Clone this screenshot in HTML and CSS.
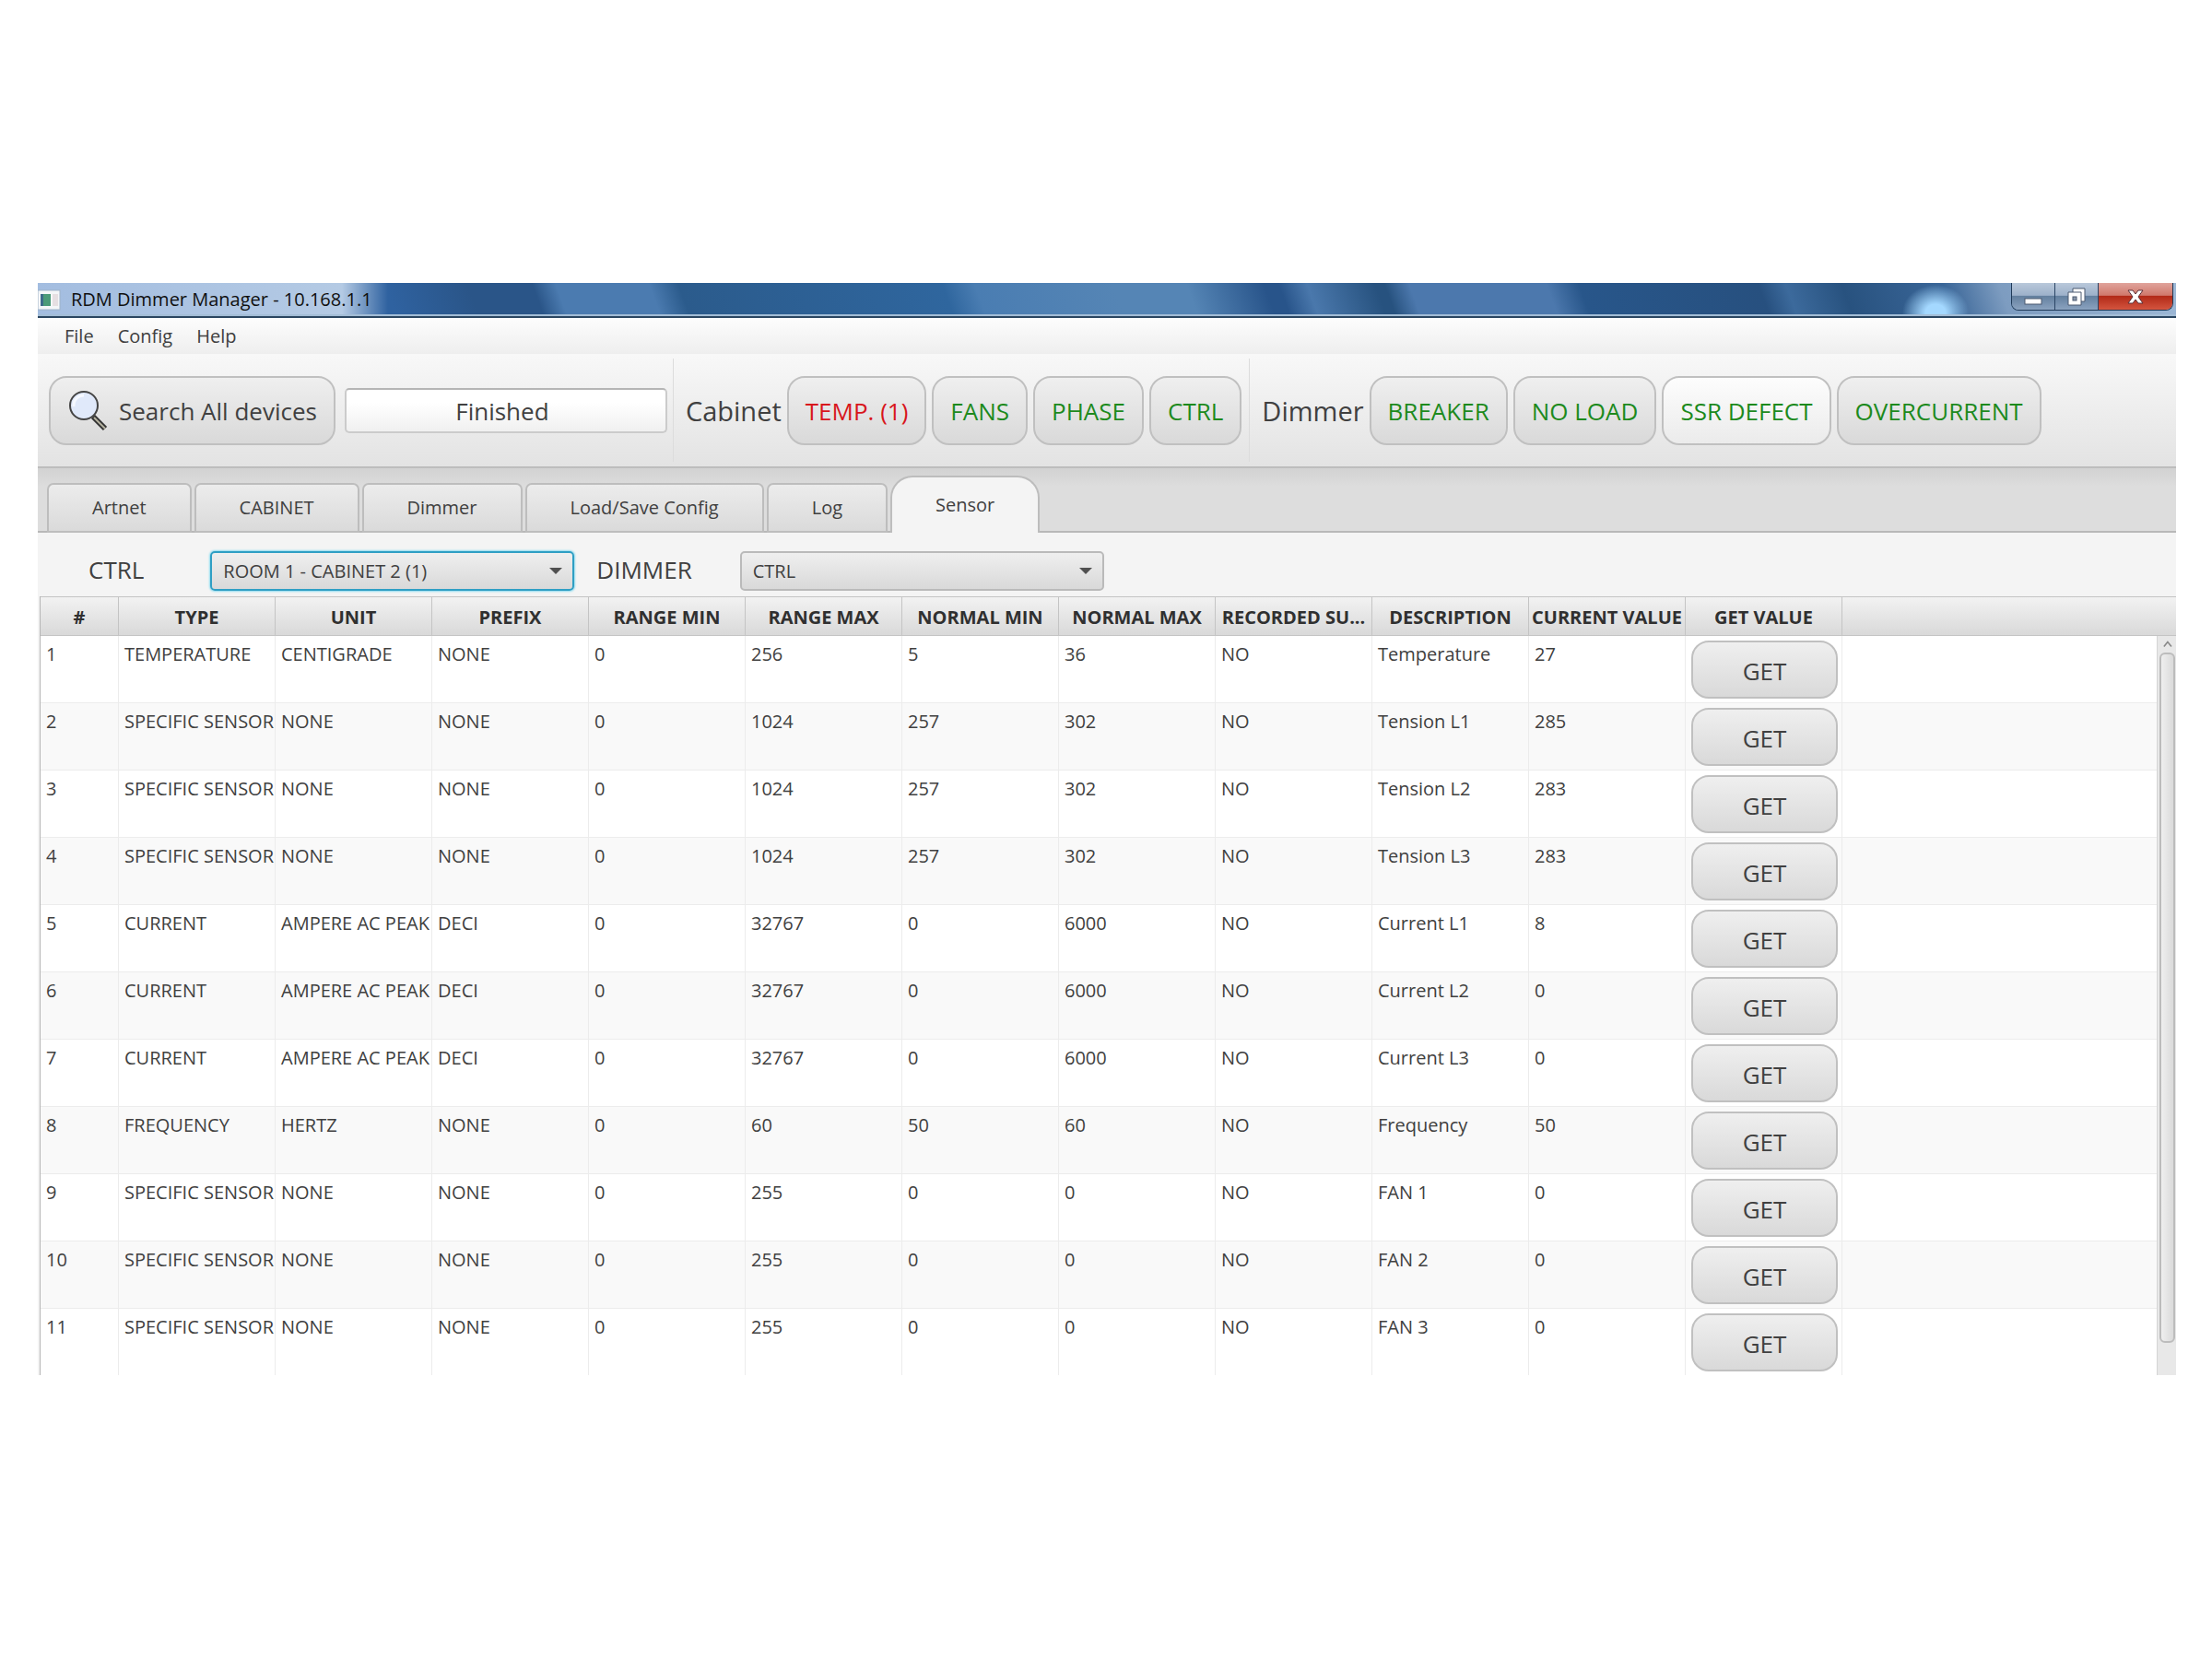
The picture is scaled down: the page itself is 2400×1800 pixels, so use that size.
FILE: index.html
```html
<!DOCTYPE html>
<html lang="en">
<head>
    <meta charset="UTF-8">
    <meta name="viewport" content="width=device-width, initial-scale=1.0">
    <title>RDM Dimmer Manager - 10.168.1.1</title>
    <link rel="stylesheet" href="styles.css">
</head>
<body>

<div class="window">
    <header class="titlebar">
        <svg class="app-icon" width="25" height="24" viewBox="0 0 25 24">
            <rect x="0" y="1" width="24" height="21" fill="#f4f6f8" stroke="#9fb3c8"/>
            <rect x="3" y="5" width="11" height="13" fill="#4a9a78"/>
            <rect x="3" y="5" width="3" height="13" fill="#3d6a8a"/>
            <rect x="16" y="5" width="6" height="13" fill="#e6dfe2"/>
        </svg>
        <h1>RDM Dimmer Manager - 10.168.1.1</h1>
        <div class="window-buttons">
            <button class="minimize" aria-label="Minimize">
                <svg width="22" height="24" viewBox="0 0 22 24">
                    <rect x="2" y="14" width="18" height="6" fill="#fff" stroke="#4d5a70"/>
                </svg>
            </button>
            <button class="restore" aria-label="Restore">
                <svg width="22" height="24" viewBox="0 0 22 24">
                    <path d="M7 3h13v14h-5v-9h-8z" fill="#fff" stroke="#4d5a70"/>
                    <path d="M2 7h14v14h-14z" fill="#fff" stroke="#4d5a70"/>
                    <rect x="7" y="12" width="4" height="4" fill="#8b98ab" stroke="#4d5a70"/>
                </svg>
            </button>
            <button class="close" aria-label="Close">
                <svg width="22" height="24" viewBox="0 0 22 24">
                    <path d="M3 5h5l3 4 3-4h5l-5 7 5 7h-5l-3-4-3 4h-5l5-7z" fill="#fff" stroke="#5c3038"/>
                </svg>
            </button>
        </div>
    </header>

    <nav class="menu">
        <button>File</button>
        <button>Config</button>
        <button>Help</button>
    </nav>

    <div class="toolbar">
        <button class="btn search">
            <svg width="46" height="46" viewBox="0 0 46 46">
                <path d="M28 29l13 13" stroke="#333" stroke-width="6"/>
                <path d="M29 30l12 12" stroke="#b5b2a0" stroke-width="2"/>
                <circle cx="18" cy="17" r="15" fill="#e0e9fa" stroke="#444" stroke-width="2"/>
                <path d="M7 18a11 11 0 0 1 11-12" fill="none" stroke="#f6f9ff" stroke-width="3"/>
            </svg>
            Search All devices
        </button>
        <input class="status" type="text" value="Finished" aria-label="Status" readonly>
        <div class="group">
            <span class="group-name">Cabinet</span>
            <button class="btn alarm">TEMP. (1)</button>
            <button class="btn ok">FANS</button>
            <button class="btn ok">PHASE</button>
            <button class="btn ok">CTRL</button>
        </div>
        <div class="group">
            <span class="group-name">Dimmer</span>
            <button class="btn ok">BREAKER</button>
            <button class="btn ok">NO LOAD</button>
            <button class="btn ok hover">SSR DEFECT</button>
            <button class="btn ok">OVERCURRENT</button>
        </div>
    </div>

    <div class="tabs" role="tablist">
        <button class="tab" role="tab">Artnet</button>
        <button class="tab" role="tab">CABINET</button>
        <button class="tab" role="tab">Dimmer</button>
        <button class="tab" role="tab">Load/Save Config</button>
        <button class="tab" role="tab">Log</button>
        <button class="tab active" role="tab" aria-selected="true">Sensor</button>
    </div>

    <div class="filters">
        <label for="ctrl">CTRL</label>
        <div class="select focused">
            <select id="ctrl"><option>ROOM 1 - CABINET 2 (1)</option></select>
        </div>
        <label for="dimmer">DIMMER</label>
        <div class="select">
            <select id="dimmer"><option>CTRL</option></select>
        </div>
    </div>

    <div class="sensors">
        <table>
            <colgroup>
                <col class="num">
                <col span="11" class="data">
                <col>
            </colgroup>
            <thead>
                <tr><th>#</th><th>TYPE</th><th>UNIT</th><th>PREFIX</th><th>RANGE MIN</th><th>RANGE MAX</th><th>NORMAL MIN</th><th>NORMAL MAX</th><th>RECORDED SU...</th><th>DESCRIPTION</th><th>CURRENT VALUE</th><th>GET VALUE</th><th></th></tr>
            </thead>
            <tbody>
                <tr><td>1</td><td>TEMPERATURE</td><td>CENTIGRADE</td><td>NONE</td><td>0</td><td>256</td><td>5</td><td>36</td><td>NO</td><td>Temperature</td><td>27</td><td class="action"><button class="btn get">GET</button></td><td></td></tr>
                <tr><td>2</td><td>SPECIFIC SENSOR</td><td>NONE</td><td>NONE</td><td>0</td><td>1024</td><td>257</td><td>302</td><td>NO</td><td>Tension L1</td><td>285</td><td class="action"><button class="btn get">GET</button></td><td></td></tr>
                <tr><td>3</td><td>SPECIFIC SENSOR</td><td>NONE</td><td>NONE</td><td>0</td><td>1024</td><td>257</td><td>302</td><td>NO</td><td>Tension L2</td><td>283</td><td class="action"><button class="btn get">GET</button></td><td></td></tr>
                <tr><td>4</td><td>SPECIFIC SENSOR</td><td>NONE</td><td>NONE</td><td>0</td><td>1024</td><td>257</td><td>302</td><td>NO</td><td>Tension L3</td><td>283</td><td class="action"><button class="btn get">GET</button></td><td></td></tr>
                <tr><td>5</td><td>CURRENT</td><td>AMPERE AC PEAK</td><td>DECI</td><td>0</td><td>32767</td><td>0</td><td>6000</td><td>NO</td><td>Current L1</td><td>8</td><td class="action"><button class="btn get">GET</button></td><td></td></tr>
                <tr><td>6</td><td>CURRENT</td><td>AMPERE AC PEAK</td><td>DECI</td><td>0</td><td>32767</td><td>0</td><td>6000</td><td>NO</td><td>Current L2</td><td>0</td><td class="action"><button class="btn get">GET</button></td><td></td></tr>
                <tr><td>7</td><td>CURRENT</td><td>AMPERE AC PEAK</td><td>DECI</td><td>0</td><td>32767</td><td>0</td><td>6000</td><td>NO</td><td>Current L3</td><td>0</td><td class="action"><button class="btn get">GET</button></td><td></td></tr>
                <tr><td>8</td><td>FREQUENCY</td><td>HERTZ</td><td>NONE</td><td>0</td><td>60</td><td>50</td><td>60</td><td>NO</td><td>Frequency</td><td>50</td><td class="action"><button class="btn get">GET</button></td><td></td></tr>
                <tr><td>9</td><td>SPECIFIC SENSOR</td><td>NONE</td><td>NONE</td><td>0</td><td>255</td><td>0</td><td>0</td><td>NO</td><td>FAN 1</td><td>0</td><td class="action"><button class="btn get">GET</button></td><td></td></tr>
                <tr><td>10</td><td>SPECIFIC SENSOR</td><td>NONE</td><td>NONE</td><td>0</td><td>255</td><td>0</td><td>0</td><td>NO</td><td>FAN 2</td><td>0</td><td class="action"><button class="btn get">GET</button></td><td></td></tr>
                <tr><td>11</td><td>SPECIFIC SENSOR</td><td>NONE</td><td>NONE</td><td>0</td><td>255</td><td>0</td><td>0</td><td>NO</td><td>FAN 3</td><td>0</td><td class="action"><button class="btn get">GET</button></td><td></td></tr>
            </tbody>
        </table>
        <div class="scrollbar">
            <svg width="21" height="18" viewBox="0 0 21 18">
                <path d="M6 12l5-6 5 6" fill="none" stroke="#888" stroke-width="2"/>
            </svg>
            <div class="thumb"></div>
        </div>
    </div>
</div>

</body>
</html>
```
FILE: styles.css
```css
* {
    box-sizing: border-box;
}
body {
    margin: 0;
    padding: 307px 39px 0 41px;
    background-color: #fff;
    font-family: 'Open Sans', 'Noto Sans', sans-serif;
    font-size: 20px;
    line-height: 24px;
    color: #404040;
}
button, input, select {
    font: inherit;
    color: inherit;
    margin: 0;
}
.window {
    background-color: #f4f4f4;
}

/* title bar */
.titlebar {
    display: flex;
    align-items: flex-start;
    height: 38px;
    border-bottom: 2px solid #2a4560;
    box-shadow: inset 0 -2px #a3bdd6;
    background:
        radial-gradient(ellipse 36px 30px at 2059px 32px, #a4d8ff 30%, rgba(164, 216, 255, 0)),
        linear-gradient(to right, #a3bde0 0, #b4cae4 330px, rgba(60, 110, 165, 0) 380px),
        linear-gradient(70deg, #2f62a0 366px, #2a5588 450px, #2a5588 516px, #4b7bb0 540px, #4b7bb0 635px, #2b5b8c 665px, #2f669e 934px, #4a7db2 967px, #5585b5 1108px, #5585b5 1183px, #28548a 1262px, #28548a 1277px, #4a78ac 1306px, #27527f 1375px, #27527f 1385px, #4c78ad 1410px, #4c78ad 1550px, #28568a 1583px, #27507f 1766px, #3c6a9c 1794px, #28527f 1851px, #3a6698 1954px, #7d9cc0 2011px, #9db8d6 100%);
}
.app-icon {
    margin-top: 7px;
}
.titlebar h1 {
    flex: 1;
    margin: 6px 0 0 11px;
    font-size: 20px;
    font-weight: normal;
    color: #101010;
}
.window-buttons {
    display: flex;
    margin-right: 3px;
    border: 1px solid #1f3a58;
    border-top: none;
    border-radius: 0 0 8px 8px;
    overflow: hidden;
}
.window-buttons button {
    width: 47px;
    height: 29px;
    padding: 0;
    border: none;
    border-right: 1px solid #2b4565;
    background: linear-gradient(#b9c8da 0, #9db1ca 46%, #64809f 50%, #8ba3c0 100%);
}
.window-buttons .close {
    width: 80px;
    border-right: none;
    background: linear-gradient(#e0a49c 0, #d0786c 46%, #b22a18 50%, #d4553f 100%);
}
.window-buttons svg {
    display: block;
    margin: 0 auto;
}

/* menu */
.menu {
    display: flex;
    height: 39px;
    padding-left: 17px;
    background: linear-gradient(#fdfdfd, #eeeeee);
}
.menu button {
    padding: 0 12px;
    margin-right: 2px;
    border: none;
    background: none;
}

/* toolbar */
.toolbar {
    display: flex;
    align-items: center;
    height: 124px;
    padding-left: 12px;
    border-bottom: 2px solid #bdbdbd;
    background: linear-gradient(#f8f8f8, #e3e3e3);
    font-size: 26px;
}
.btn {
    height: 75px;
    padding: 2px 18px 0;
    border: 2px solid #c0c0c0;
    border-radius: 19px;
    background: linear-gradient(#efefef, #d9d9d9);
    font-size: 26px;
    white-space: nowrap;
}
.search {
    display: flex;
    align-items: center;
    gap: 10px;
}
.status {
    width: 350px;
    height: 49px;
    margin: 0 6px 0 10px;
    padding: 2px 8px 0 0;
    border: 2px solid #cbcbcb;
    border-top-color: #b5b5b5;
    border-radius: 5px;
    background: linear-gradient(#fff 30%, #f0f0f0);
    text-align: center;
}
.group {
    display: flex;
    align-items: center;
    gap: 6px;
    height: 112px;
    padding: 0 8px 0 13px;
    border-left: 1px solid #dcdcdc;
}
.group-name {
    padding-top: 2px;
    font-size: 29px;
}
.ok {
    color: #1d8a1d;
}
.alarm {
    color: #d8161c;
}
.hover {
    background: linear-gradient(#fdfdfd, #ebebeb);
}

/* tabs */
.tabs {
    display: flex;
    align-items: flex-end;
    gap: 3px;
    height: 70px;
    padding-left: 10px;
    background: linear-gradient(#d2d2d2, #dddddd 20px);
    box-shadow: inset 0 -2px #b8b8b8;
}
.tab {
    height: 54px;
    padding: 0 47px;
    border: 2px solid #bdbdbd;
    border-radius: 7px 7px 0 0;
    background: linear-gradient(#ececec, #dadada);
}
.tab.active {
    height: 62px;
    border-bottom: none;
    border-radius: 24px 24px 0 0;
    background: #f4f4f4;
}

/* filters */
.filters {
    display: flex;
    align-items: center;
    height: 69px;
    padding: 14px 0 0 55px;
}
.filters label {
    padding-bottom: 4px;
    font-size: 26px;
}
.select {
    position: relative;
    width: 395px;
    margin: 0 24px 0 72px;
}
.filters label + .select:last-child {
    margin-left: 52px;
}
.select select {
    display: block;
    appearance: none;
    width: 100%;
    height: 43px;
    padding: 0 40px 0 12px;
    border: 2px solid #bababa;
    border-radius: 5px;
    background: linear-gradient(#efefef, #d9d9d9);
}
.select::after {
    content: "";
    position: absolute;
    top: 18px;
    right: 13px;
    border: 7px solid transparent;
    border-top-color: #505050;
    border-bottom: none;
}
.select.focused select {
    border-color: #2f9fc4;
    box-shadow: 0 0 2px 1px #8fdcf0;
}

/* sensor table */
.sensors {
    display: grid;
    grid-template-columns: 1fr 21px;
    padding-left: 2px;
}
table {
    grid-area: 1 / 1 / 2 / 3;
    width: 100%;
    border-collapse: separate;
    border-spacing: 0;
    border-left: 1px solid #b5b5b5;
    table-layout: fixed;
    background-color: #fff;
}
.num {
    width: 85px;
}
.data {
    width: 170px;
}
th {
    height: 43px;
    padding: 2px 0 0;
    border: solid #c4c4c4;
    border-width: 1px 1px 1px 0;
    background: linear-gradient(#f2f2f2, #d9d9d9);
    font-weight: bold;
    color: #303030;
    white-space: nowrap;
}
td {
    height: 73px;
    padding: 8px 0 0 6px;
    border-right: 1px solid #ececec;
    border-bottom: 1px solid #ececec;
    vertical-align: top;
    white-space: nowrap;
}
th:last-child, td:last-child {
    border-right: none;
}
tbody tr:nth-child(even) {
    background-color: #f9f9f9;
}
tbody tr:last-child td {
    height: 72px;
    border-bottom: none;
}
.action {
    padding: 5px 4px 0 6px;
}
.get {
    display: block;
    width: 100%;
    height: 63px;
}
.scrollbar {
    grid-area: 1 / 2;
    display: flex;
    flex-direction: column;
    margin-top: 43px;
    padding: 0 1px 35px 2px;
    border-left: 1px solid #d5d5d5;
    background-color: #e8e8e8;
}
.scrollbar svg {
    width: 100%;
}
.thumb {
    flex: 1;
    border: 2px solid #bcbcbc;
    border-radius: 6px;
    background: linear-gradient(to right, #efefef, #dadada);
}
```
